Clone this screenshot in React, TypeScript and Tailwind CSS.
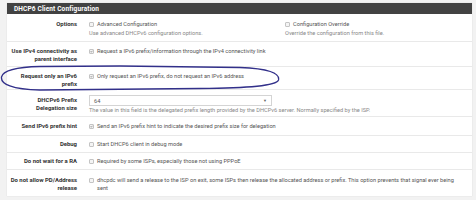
import React from "react";

type CheckProps = { checked?: boolean };

const Check = ({ checked }: CheckProps) => (
    <span className="inline-flex items-center justify-center w-[5px] h-[5px] shrink-0 border border-[#c4c4c4] rounded-[1px] bg-[#f4f4f4] mr-[3px]">
        {checked && (
            <svg viewBox="0 0 10 10" className="w-[5px] h-[5px]">
                <path d="M2 5.2 L4.2 7.4 L8.2 2.6" fill="none" stroke="#555" strokeWidth="1.8" />
            </svg>
        )}
    </span>
);

const Label = ({ children, pad }: { children: React.ReactNode; pad: string }) => (
    <div className={`w-[76px] shrink-0 pr-[6px] text-right font-bold text-[#333] text-[5.95px] ${pad}`}>{children}</div>
);

const Row = ({ children }: { children: React.ReactNode }) => (
    <div className="flex border-b border-[#e9e9e9]">{children}</div>
);

const CheckLine = ({ checked, text }: { checked?: boolean; text: string }) => (
    <div className="flex items-center h-[8px] text-[#555]">
        <Check checked={checked} />
        <span>{text}</span>
    </div>
);

export default function App() {
    return (
        <div className="relative w-[476px] h-[200px] overflow-hidden bg-[#f2f2f2] pt-[3px] pl-[7px] pr-[4px] font-['Roboto',sans-serif] text-[5.65px] leading-[8px]">
            <div className="bg-white shadow-[0_0_1px_rgba(0,0,0,0.15)]">
                <div className="h-[11px] bg-[#424242] px-[7px] flex items-center text-white font-bold text-[6.5px] tracking-[0.15px]">
                    DHCP6 Client Configuration
                </div>

                <Row>
                    <Label pad="pt-[6px]">Options</Label>
                    <div className="flex-1 pl-[6px] pt-[6px] pb-[4px] grid grid-cols-[196px_1fr]">
                        <div>
                            <CheckLine text="Advanced Configuration" />
                            <div className="mt-[1px] text-[#888]">Use advanced DHCPv6 configuration options.</div>
                        </div>
                        <div>
                            <CheckLine text="Configuration Override" />
                            <div className="mt-[1px] text-[#888]">Override the configuration from this file.</div>
                        </div>
                    </div>
                </Row>

                <Row>
                    <Label pad="pt-[5px] pb-[3px]">
                        Use IPv4 connectivity as
                        <br />
                        parent interface
                    </Label>
                    <div className="flex-1 pl-[6px] pt-[5px]">
                        <CheckLine checked text="Request a IPv6 prefix/information through the IPv4 connectivity link" />
                    </div>
                </Row>

                <Row>
                    <Label pad="pt-[5px] pb-[1px]">
                        Request only an IPv6
                        <br />
                        prefix
                    </Label>
                    <div className="flex-1 pl-[6px] pt-[5px]">
                        <CheckLine checked text="Only request an IPv6 prefix, do not request an IPv6 address" />
                    </div>
                </Row>

                <Row>
                    <Label pad="pt-[6px] pb-[2px]">
                        DHCPv6 Prefix
                        <br />
                        Delegation size
                    </Label>
                    <div className="flex-1 pl-[6px] pt-[5px] pb-[2px]">
                        <div className="w-[183px] h-[11px] border border-[#d4d4d4] flex items-center justify-between px-[4px] text-[#555]">
                            <span>64</span>
                            <span className="text-[4px] text-[#666]">▼</span>
                        </div>
                        <div className="text-[#888]">
                            The value in this field is the delegated prefix length provided by the DHCPv6 server. Normally specified by the ISP.
                        </div>
                    </div>
                </Row>

                <Row>
                    <Label pad="py-[5px]">Send IPv6 prefix hint</Label>
                    <div className="flex-1 pl-[6px] py-[5px]">
                        <CheckLine checked text="Send an IPv6 prefix hint to indicate the desired prefix size for delegation" />
                    </div>
                </Row>

                <Row>
                    <Label pad="py-[4px]">Debug</Label>
                    <div className="flex-1 pl-[6px] py-[4px]">
                        <CheckLine text="Start DHCP6 client in debug mode" />
                    </div>
                </Row>

                <Row>
                    <Label pad="py-[4px]">Do not wait for a RA</Label>
                    <div className="flex-1 pl-[6px] py-[4px]">
                        <CheckLine text="Required by some ISPs, especially those not using PPPoE" />
                    </div>
                </Row>

                <div className="flex">
                    <Label pad="pt-[5.5px] pb-[4px]">
                        Do not allow PD/Address
                        <br />
                        release
                    </Label>
                    <div className="flex-1 pl-[6px] pr-[8px] pt-[5.5px] flex items-start text-[#555]">
                        <span className="mt-[1.5px]">
                            <Check />
                        </span>
                        <span>
                            dhcpdc will send a release to the ISP on exit, some ISPs then release the allocated address or prefix. This option prevents that signal ever being sent
                        </span>
                    </div>
                </div>
            </div>

            <svg className="absolute left-0 top-0 pointer-events-none" width="476" height="200" viewBox="0 0 476 200">
                <path
                    d="M40 66.5 C18 67 3 70 1.5 77 C0.5 84 12 89.5 40 90 L200 88.5 C250 88 276 86 278.5 80 C280 73 268 68.5 240 67.5 L120 66 Z"
                    fill="none"
                    stroke="#32308a"
                    strokeWidth="1.3"
                />
            </svg>
        </div>
    );
}
